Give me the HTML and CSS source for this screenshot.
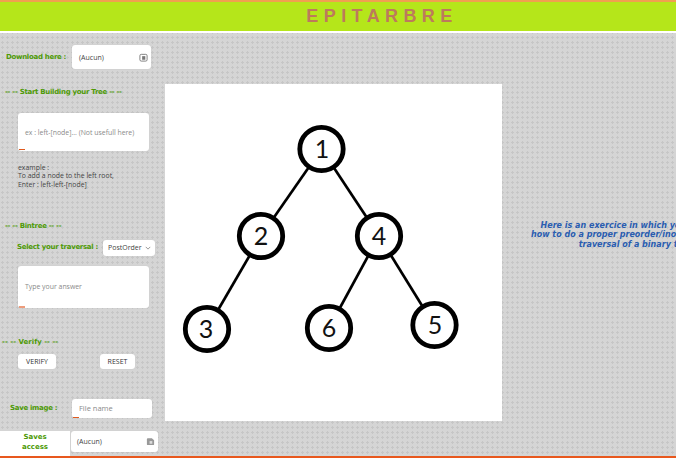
FILE: index.html
```html
<!DOCTYPE html>
<html lang="en">
<head>
<meta charset="utf-8">
<title>Epitarbre</title>
<link rel="stylesheet" href="styles.css">
</head>
<body>
<div class="topline"></div>
<header class="banner"><h1>EPITARBRE</h1></header>
<main class="layout">
  <aside class="side">
    <div class="row download">
      <span class="label">Download here :</span>
      <div class="file"><span>(Aucun)</span>
        <svg class="fileicon" viewBox="0 0 10 10"><rect x="1" y="1.5" width="8" height="7.5" rx="1.5" fill="none" stroke="#777" stroke-width="1"/><path d="M3.5 3.5h3.5v4H3.5z" fill="#777"/></svg>
      </div>
    </div>
    <div class="heading start">-- -- Start Building your Tree -- --</div>
    <div class="field tree"><span class="ph">ex : left-[node]... (Not usefull here)</span><i class="mark"></i></div>
    <p class="example">example :<br>To add a node to the left root,<br>Enter : left-left-[node]</p>
    <div class="heading bintree">-- -- Bintree -- --</div>
    <div class="row traversal">
      <span class="label">Select your traversal :</span>
      <div class="select">PostOrder
        <svg class="chev" viewBox="0 0 8 5"><path d="M1 1l3 3 3-3" fill="none" stroke="#555" stroke-width=".8"/></svg>
      </div>
    </div>
    <div class="field answer"><span class="ph">Type your answer</span><i class="mark faint"></i></div>
    <div class="heading verify">-- -- Verify -- --</div>
    <div class="row buttons">
      <button class="btn verifybtn">VERIFY</button>
      <button class="btn resetbtn">RESET</button>
    </div>
    <div class="row save">
      <span class="label">Save image :</span>
      <div class="field filename"><span class="ph">File name</span><i class="mark short"></i></div>
    </div>
  </aside>
  <section class="board">
    <svg class="tree-svg" viewBox="0 0 337 337" width="337" height="337">
      <g class="edges">
        <line x1="156.5" y1="65" x2="96" y2="152"/>
        <line x1="156.5" y1="65" x2="214" y2="152"/>
        <line x1="96" y1="152" x2="42" y2="245"/>
        <line x1="214" y1="152" x2="164" y2="244"/>
        <line x1="214" y1="152" x2="269" y2="241"/>
      </g>
      <g class="nodes">
        <circle cx="156.5" cy="65" r="21.7"/><circle cx="96" cy="152" r="21.7"/><circle cx="214" cy="152" r="21.7"/>
        <circle cx="42" cy="245" r="21.7"/><circle cx="164" cy="244" r="21.7"/><circle cx="269.5" cy="241" r="21.7"/>
      </g>
      <g class="labels">
        <text x="157" y="74">1</text><text x="96" y="161">2</text><text x="214" y="161">4</text>
        <text x="41" y="254">3</text><text x="164" y="253">6</text><text x="270" y="250">5</text>
      </g>
    </svg>
  </section>
  <section class="intro">
    <p>Here is an exercice in which you will learn<br>how to do a proper preorder/inorder/postorder<br>traversal of a binary tree</p>
  </section>
</main>
<div class="saves">
  <div class="saves-tab">Saves access</div>
  <div class="file savesfile"><span>(Aucun)</span>
    <svg class="fileicon" viewBox="0 0 10 10"><path d="M1 2.5q0-1 1-1h4.5l2.5 2v4.5q0 1-1 1H2q-1 0-1-1z" fill="#999"/><path d="M4 4.5h3v3H4z" fill="#ddd"/></svg>
  </div>
</div>
<div class="bottomline"></div>
</body>
</html>
```
FILE: styles.css
```css
* { box-sizing: border-box; }
html, body { margin: 0; height: 458px; overflow: hidden; }
body {
  position: relative;
  width: 676px;
  background-color: #d5d5d5;
  background-image: radial-gradient(circle, #c6c6c6 1px, transparent 1.3px);
  background-size: 5px 5px;
  font-family: "Open Sans", sans-serif;
  color: #444;
}
.topline { height: 2px; background: #f0a050; }
.banner { height: 29px; background: #b5e61a; display: flex; align-items: center; justify-content: center; padding-left: 88px; }
.banner h1 { margin: 0; font: bold 18px "Liberation Sans", sans-serif; letter-spacing: 5.4px; color: #bd7a5c; }
.layout { border-top: 2px solid #fff; display: flex; height: 425px; }
.side { width: 165px; flex: none; display: flex; flex-direction: column; }
.row { display: flex; align-items: center; }
.label { font: bold 7px/9px "DejaVu Sans", sans-serif; letter-spacing: -.3px; color: #4e9a06; white-space: nowrap; }
.heading { font: bold 7px/9px "DejaVu Sans", sans-serif; letter-spacing: -.3px; color: #4e9a06; white-space: nowrap; }
.file, .field, .select, .btn { background: #fff; border-radius: 3px; box-shadow: 0 0 1px #bbb; }
.download { margin-top: 12px; padding-left: 6px; }
.download .label { width: 66px; }
.file { display: flex; align-items: center; justify-content: space-between; font-size: 7px; color: #444; }
.download .file { width: 79px; height: 24px; padding: 0 3px 0 7px; }
.fileicon { width: 9px; height: 9px; }
.start { margin-top: 19px; padding-left: 5px; }
.field { position: relative; display: flex; align-items: center; }
.ph { font-size: 6.9px; color: #8a8a8a; white-space: nowrap; }
.mark { position: absolute; left: 1px; bottom: 1px; width: 6px; height: 1px; background: #e05a1e; }
.mark.faint { height: 2px; background: #ee9c7c; bottom: 0; }
.tree { margin: 16px 0 0 18px; width: 131px; height: 38px; padding-left: 7px; }
.example { margin: 13px 0 0 18px; font-size: 6.9px; line-height: 8.3px; color: #444; }
.bintree { margin-top: 33px; padding-left: 5px; }
.traversal { margin-top: 9px; padding-left: 17px; }
.traversal .label { width: 86px; }
.select { width: 52px; height: 16px; display: flex; align-items: center; gap: 3px; padding-left: 5px; font-size: 7px; color: #444; }
.chev { width: 6px; height: 4px; }
.answer { margin: 10px 0 0 18px; width: 131px; height: 42px; padding-left: 7px; }
.verify { margin-top: 30px; padding-left: 2px; letter-spacing: 0; }
.buttons { margin-top: 7px; padding-left: 18px; gap: 44px; }
.btn { height: 15px; border: 0; padding: 0; font: 7px "Open Sans", sans-serif; color: #333; }
.verifybtn { width: 38px; }
.resetbtn { width: 35px; }
.save { margin-top: 30px; padding-left: 10px; }
.save .label { width: 62px; }
.filename { width: 80px; height: 19px; padding-left: 7px; }
.filename .ph { font-size: 7.5px; }
.mark.short { left: 1px; bottom: 0; }
.board { width: 337px; height: 337px; flex: none; margin-top: 51px; background: #fff; }
.tree-svg { display: block; }
.edges line { stroke: #000; stroke-width: 2.7; }
.nodes circle { fill: #fff; stroke: #000; stroke-width: 4.8; }
.labels text { font: 25px "Lato", sans-serif; text-anchor: middle; fill: #111; }
.intro { flex: none; width: 209px; margin-left: 29px; padding-top: 188px; }
.intro p { margin: 0; font: italic bold 8px/9.3px "DejaVu Sans", sans-serif; color: #2a5db0; text-align: center; white-space: nowrap; }
.saves { position: absolute; left: 0; top: 431px; display: flex; align-items: flex-start; }
.saves-tab { width: 70px; height: 25px; background: #fff; font: bold 7px/9.5px "DejaVu Sans", sans-serif; color: #4e9a06; text-align: center; padding: 2px 14px 0; }
.savesfile { width: 87px; height: 21px; margin-left: 1px; padding: 0 3px 0 6px; }
.bottomline { position: absolute; left: 0; right: 0; bottom: 0; height: 2px; background: #e8581e; }
```
